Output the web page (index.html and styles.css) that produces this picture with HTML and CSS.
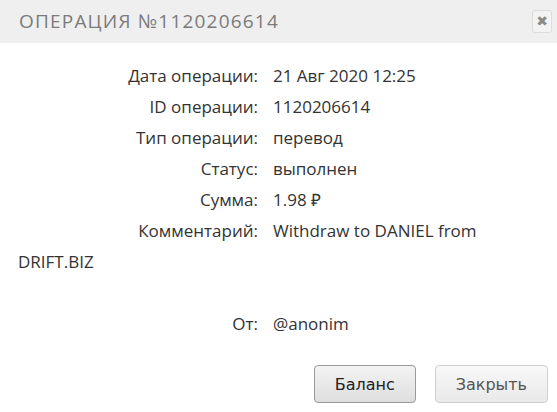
FILE: index.html
```html
<!DOCTYPE html>
<html lang="ru">
<head>
    <meta charset="UTF-8">
    <meta name="viewport" content="width=device-width, initial-scale=1.0">
    <title>Операция №1120206614</title>
    <link rel="stylesheet" href="styles.css">
</head>
<body>
    <div class="dialog">
        <div class="titlebar">
            <span class="title">Операция №1120206614</span>
            <button class="close" title="Закрыть">&#10006;</button>
        </div>

        <div class="content">
            <div class="row"><span class="label">Дата операции:</span>21 Авг 2020 12:25</div>
            <div class="row"><span class="label">ID операции:</span>1120206614</div>
            <div class="row"><span class="label">Тип операции:</span>перевод</div>
            <div class="row"><span class="label">Статус:</span>выполнен</div>
            <div class="row"><span class="label">Сумма:</span>1.98 &#8381;</div>
            <div class="row"><span class="label">Комментарий:</span>Withdraw to DANIEL from DRIFT.BIZ</div>
            <div class="row">&nbsp;</div>
            <div class="row"><span class="label">От:</span>@anonim</div>
        </div>

        <div class="buttons">
            <button class="btn btn-main">Баланс</button>
            <button class="btn">Закрыть</button>
        </div>
    </div>
</body>
</html>
```

FILE: styles.css
```css
body{
    margin: 0;
    background: #fff;
    font-family: "Open Sans", sans-serif;
}
.dialog{
    width: 557px;
    height: 412px;
    display: flex;
    flex-direction: column;
}
.titlebar{
    height: 43px;
    background: #efefef;
    display: flex;
    justify-content: space-between;
    align-items: center;
    padding: 0 5px 0 19px;
    box-sizing: border-box;
}
.title{
    font-size: 19px;
    letter-spacing: 1.2px;
    text-transform: uppercase;
    color: #7b7b7b;
    margin-top: -2px;
}
.close{
    width: 20px;
    height: 23px;
    padding: 0;
    margin-top: -1px;
    border: 1px solid #dcdcdc;
    border-radius: 3px;
    background: #f3f3f3;
    color: #8a8a8a;
    font-family: "DejaVu Sans", sans-serif;
    font-size: 14px;
    line-height: 21px;
}

.content{
    padding: 17px 18px 0 18px;
    font-size: 17px;
    line-height: 31px;
    color: #333;
}
.label{
    display: inline-block;
    width: 240px;
    margin-right: 15px;
    text-align: right;
}

.buttons{
    display: flex;
    justify-content: flex-end;
    gap: 19px;
    padding: 26px 9px 0 0;
}
.btn{
    height: 38px;
    padding: 0 20px;
    border: 1px solid #d0d0d0;
    border-radius: 4px;
    background: linear-gradient(#f8f8f8, #e9e9e9);
    color: #555;
    font-family: "DejaVu Sans", Verdana, sans-serif;
    font-size: 16px;
}
.btn-main{
    border-color: #9a9a9a;
    background: linear-gradient(#f3f3f3, #dedede);
    color: #222;
}
```
